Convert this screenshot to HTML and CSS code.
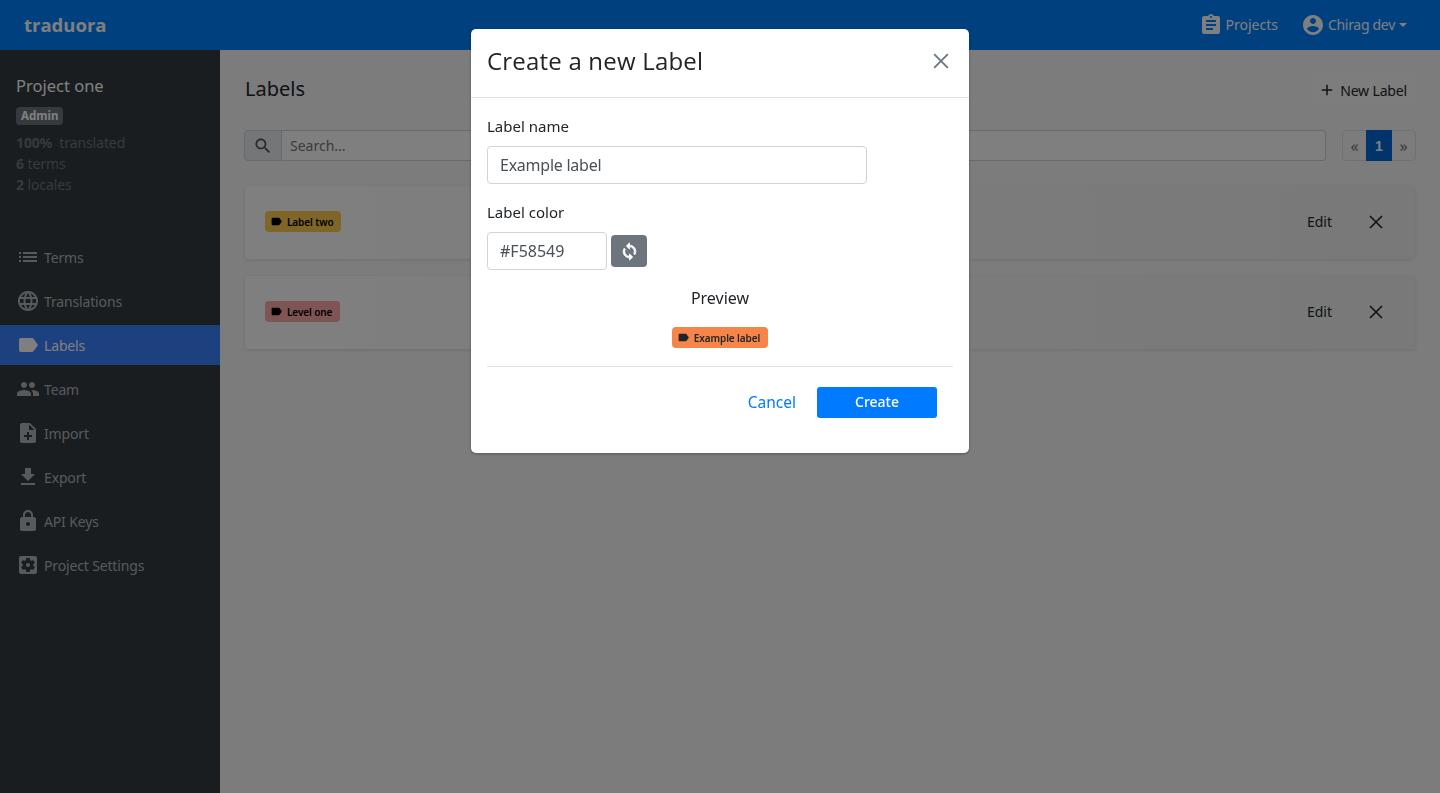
FILE: index.html
```html
<!DOCTYPE html>
<html>
<head>
  <title>Traduora - Labels</title>
  <link rel="stylesheet" href="styles.css">
</head>
<body>
  <svg class="icon-defs" width="0" height="0">
    <symbol id="i-assignment" viewBox="0 0 24 24"><path d="M19 3h-4.18C14.4 1.84 13.3 1 12 1c-1.3 0-2.4.84-2.82 2H5c-1.1 0-2 .9-2 2v14c0 1.1.9 2 2 2h14c1.1 0 2-.9 2-2V5c0-1.1-.9-2-2-2zm-7 0c.55 0 1 .45 1 1s-.45 1-1 1-1-.45-1-1 .45-1 1-1zm2 14H7v-2h7v2zm3-4H7v-2h10v2zm0-4H7V7h10v2z"/></symbol>
    <symbol id="i-account" viewBox="0 0 24 24"><path d="M12 2C6.48 2 2 6.48 2 12s4.48 10 10 10 10-4.48 10-10S17.52 2 12 2zm0 3c1.66 0 3 1.34 3 3s-1.34 3-3 3-3-1.34-3-3 1.34-3 3-3zm0 14.2c-2.5 0-4.71-1.28-6-3.22.03-1.99 4-3.08 6-3.08 1.99 0 5.97 1.09 6 3.08-1.29 1.94-3.5 3.22-6 3.22z"/></symbol>
    <symbol id="i-list" viewBox="0 0 24 24"><path d="M3 13h2v-2H3v2zm0 4h2v-2H3v2zm0-8h2V7H3v2zm4 4h14v-2H7v2zm0 4h14v-2H7v2zM7 7v2h14V7H7z"/></symbol>
    <symbol id="i-language" viewBox="0 0 24 24"><path d="M11.99 2C6.47 2 2 6.48 2 12s4.47 10 9.99 10C17.52 22 22 17.52 22 12S17.52 2 11.99 2zm6.93 6h-2.95c-.32-1.25-.78-2.45-1.38-3.56 1.84.63 3.37 1.91 4.33 3.56zM12 4.04c.83 1.2 1.48 2.53 1.91 3.96h-3.82c.43-1.43 1.08-2.76 1.91-3.96zM4.26 14C4.1 13.36 4 12.69 4 12s.1-1.36.26-2h3.38c-.08.66-.14 1.32-.14 2 0 .68.06 1.34.14 2H4.26zm.82 2h2.95c.32 1.25.78 2.45 1.38 3.56-1.84-.63-3.37-1.9-4.33-3.56zm2.95-8H5.08c.96-1.66 2.49-2.93 4.33-3.56C8.81 5.55 8.35 6.75 8.03 8zM12 19.96c-.83-1.2-1.48-2.53-1.91-3.96h3.82c-.43 1.43-1.08 2.76-1.91 3.96zM14.34 14H9.66c-.09-.66-.16-1.32-.16-2 0-.68.07-1.35.16-2h4.68c.09.65.16 1.32.16 2 0 .68-.07 1.34-.16 2zm.25 5.56c.6-1.11 1.06-2.31 1.38-3.56h2.95c-.96 1.65-2.49 2.93-4.33 3.56zM16.36 14c.08-.66.14-1.32.14-2 0-.68-.06-1.34-.14-2h3.38c.16.64.26 1.31.26 2s-.1 1.36-.26 2h-3.38z"/></symbol>
    <symbol id="i-label" viewBox="0 0 24 24"><path d="M17.63 5.84C17.27 5.33 16.67 5 16 5L5 5.01C3.9 5.01 3 5.9 3 7v10c0 1.1.9 1.99 2 1.99L16 19c.67 0 1.27-.33 1.63-.84L22 12l-4.37-6.16z"/></symbol>
    <symbol id="i-people" viewBox="0 0 24 24"><path d="M16 11c1.66 0 2.99-1.34 2.99-3S17.66 5 16 5c-1.66 0-3 1.34-3 3s1.34 3 3 3zm-8 0c1.66 0 2.99-1.34 2.99-3S9.66 5 8 5C6.34 5 5 6.34 5 8s1.34 3 3 3zm0 2c-2.33 0-7 1.17-7 3.5V19h14v-2.5c0-2.33-4.67-3.5-7-3.5zm8 0c-.29 0-.62.02-.97.05 1.16.84 1.97 1.97 1.97 3.45V19h6v-2.5c0-2.33-4.67-3.5-7-3.5z"/></symbol>
    <symbol id="i-note-add" viewBox="0 0 24 24"><path d="M14 2H6c-1.1 0-1.99.9-1.99 2L4 20c0 1.1.89 2 1.99 2H18c1.1 0 2-.9 2-2V8l-6-6zm2 14h-3v3h-2v-3H8v-2h3v-3h2v3h3v2zm-3-7V3.5L18.5 9H13z"/></symbol>
    <symbol id="i-download" viewBox="0 0 24 24"><path d="M19 9h-4V3H9v6H5l7 7 7-7zM5 18v2h14v-2H5z"/></symbol>
    <symbol id="i-lock" viewBox="0 0 24 24"><path d="M18 8h-1V6c0-2.76-2.24-5-5-5S7 3.24 7 6v2H6c-1.1 0-2 .9-2 2v10c0 1.1.9 2 2 2h12c1.1 0 2-.9 2-2V10c0-1.1-.9-2-2-2zm-6 9c-1.1 0-2-.9-2-2s.9-2 2-2 2 .9 2 2-.9 2-2 2zm3.1-9H8.9V6c0-1.71 1.39-3.1 3.1-3.1 1.71 0 3.1 1.39 3.1 3.1v2z"/></symbol>
    <symbol id="i-settings" viewBox="0 0 24 24"><path d="M12 10c-1.1 0-2 .9-2 2s.9 2 2 2 2-.9 2-2-.9-2-2-2zm7-7H5c-1.11 0-2 .9-2 2v14c0 1.1.89 2 2 2h14c1.11 0 2-.9 2-2V5c0-1.1-.89-2-2-2zm-1.75 9c0 .23-.02.46-.05.68l1.48 1.16c.13.11.17.3.08.45l-1.4 2.42c-.09.15-.27.21-.43.15l-1.74-.7c-.36.28-.76.51-1.18.69l-.26 1.85c-.03.17-.18.3-.35.3h-2.8c-.17 0-.32-.13-.35-.29l-.26-1.85c-.43-.18-.82-.41-1.18-.69l-1.74.7c-.16.06-.34 0-.43-.15l-1.4-2.42c-.09-.15-.05-.34.08-.45l1.48-1.16c-.03-.23-.05-.46-.05-.69 0-.23.02-.46.05-.68l-1.48-1.16c-.13-.11-.17-.3-.08-.45l1.4-2.42c.09-.15.27-.21.43-.15l1.74.7c.36-.28.76-.51 1.18-.69l.26-1.85c.03-.17.18-.3.35-.3h2.8c.17 0 .32.13.35.29l.26 1.85c.43.18.82.41 1.18.69l1.74-.7c.16-.06.34 0 .43.15l1.4 2.42c.09.15.05.34-.08.45l-1.48 1.16c.03.23.05.46.05.69z"/></symbol>
    <symbol id="i-sync" viewBox="0 0 24 24"><path stroke="currentColor" stroke-width="1" d="M12 4V1L8 5l4 4V6c3.31 0 6 2.69 6 6 0 1.01-.25 1.97-.7 2.8l1.46 1.46C19.54 15.03 20 13.57 20 12c0-4.42-3.58-8-8-8zm0 14c-3.31 0-6-2.69-6-6 0-1.01.25-1.97.7-2.8L5.24 7.74C4.46 8.97 4 10.43 4 12c0 4.42 3.58 8 8 8v3l4-4-4-4v3z"/></symbol>
    <symbol id="i-search" viewBox="0 0 24 24"><path d="M15.5 14h-.79l-.28-.27C15.41 12.59 16 11.11 16 9.5 16 5.91 13.09 3 9.5 3S3 5.91 3 9.5 5.91 16 9.5 16c1.61 0 3.09-.59 4.23-1.57l.27.28v.79l5 4.99L20.49 19l-4.99-5zm-6 0C7.01 14 5 11.99 5 9.5S7.01 5 9.5 5 14 7.01 14 9.5 11.99 14 9.5 14z"/></symbol>
    <symbol id="i-add" viewBox="0 0 24 24"><path d="M19 13h-6v6h-2v-6H5v-2h6V5h2v6h6v2z"/></symbol>
    <symbol id="i-x" viewBox="0 0 14 14"><path fill="none" stroke="currentColor" stroke-width="1.6" d="M1 1l12 12M13 1L1 13"/></symbol>
  </svg>

  <nav class="navbar">
    <a class="brand">traduora</a>
    <div class="nav-links">
      <a class="nav-link"><svg class="nav-icon"><use href="#i-assignment"/></svg>Projects</a>
      <a class="nav-link user-link"><svg class="nav-icon"><use href="#i-account"/></svg>Chirag dev<span class="caret"></span></a>
    </div>
  </nav>

  <div class="layout">
    <aside class="sidebar">
      <div class="project">
        <div class="project-name">Project one</div>
        <span class="role-badge">Admin</span>
        <div class="stats">
          <div><b>100%</b>&nbsp; translated</div>
          <div><b>6</b> terms</div>
          <div><b>2</b> locales</div>
        </div>
      </div>
      <ul class="side-menu">
        <li><svg><use href="#i-list"/></svg>Terms</li>
        <li><svg><use href="#i-language"/></svg>Translations</li>
        <li class="active"><svg><use href="#i-label"/></svg>Labels</li>
        <li><svg><use href="#i-people"/></svg>Team</li>
        <li><svg><use href="#i-note-add"/></svg>Import</li>
        <li><svg><use href="#i-download"/></svg>Export</li>
        <li><svg><use href="#i-lock"/></svg>API Keys</li>
        <li><svg><use href="#i-settings"/></svg>Project Settings</li>
      </ul>
    </aside>

    <main class="content">
      <div class="content-head">
        <h1>Labels</h1>
        <button class="btn-new"><svg><use href="#i-add"/></svg>New Label</button>
      </div>
      <div class="toolbar">
        <div class="search">
          <span class="search-addon"><svg><use href="#i-search"/></svg></span>
          <input class="search-input" type="text" placeholder="Search...">
        </div>
        <div class="pager">
          <span>«</span>
          <span class="current">1</span>
          <span>»</span>
        </div>
      </div>
      <div class="card">
        <span class="tag tag-yellow"><svg><use href="#i-label"/></svg>Label two</span>
        <span class="card-actions"><a>Edit</a><svg><use href="#i-x"/></svg></span>
      </div>
      <div class="card">
        <span class="tag tag-red"><svg><use href="#i-label"/></svg>Level one</span>
        <span class="card-actions"><a>Edit</a><svg><use href="#i-x"/></svg></span>
      </div>
    </main>
  </div>

  <div class="backdrop">
    <div class="modal">
      <div class="modal-header">
        <h2>Create a new Label</h2>
        <svg class="modal-close"><use href="#i-x"/></svg>
      </div>
      <form class="modal-body">
        <label>Label name</label>
        <input class="field field-name" type="text" value="Example label">
        <label>Label color</label>
        <div class="color-row">
          <input class="field field-color" type="text" value="#F58549">
          <button class="btn-refresh" type="button"><svg><use href="#i-sync"/></svg></button>
        </div>
        <div class="preview-title">Preview</div>
        <div class="preview">
          <span class="tag tag-orange"><svg><use href="#i-label"/></svg>Example label</span>
        </div>
        <div class="modal-actions">
          <a class="btn-cancel">Cancel</a>
          <button class="btn-create" type="button">Create</button>
        </div>
      </form>
    </div>
  </div>
</body>
</html>
```

FILE: styles.css
```css
* {
  box-sizing: border-box;
}
html, body {
  height: 100%;
}
body {
  margin: 0;
  overflow: hidden;
  background: #f8f9fa;
  color: #212529;
  font-family: "Noto Sans", sans-serif;
  font-size: 14px;
}
.icon-defs {
  display: block;
  height: 0;
}
svg {
  fill: currentColor;
}

/* top bar */
.navbar {
  height: 50px;
  background: #0080ff;
  display: flex;
  align-items: center;
  justify-content: space-between;
  padding: 0 33px 1px 24px;
  color: #fff;
  position: relative;
}
.brand {
  font-family: "Open Sans", sans-serif;
  font-size: 18.5px;
  font-weight: 700;
}
.nav-links {
  display: flex;
  gap: 23px;
}
.nav-link {
  display: flex;
  align-items: center;
  gap: 3px;
}
.user-link {
  letter-spacing: -0.3px;
}
.nav-icon {
  width: 24px;
  height: 24px;
}
.caret {
  width: 0;
  height: 0;
  margin-left: 1px;
  border: 4px solid transparent;
  border-top-color: #fff;
  border-bottom: 0;
}

/* sidebar */
.layout {
  display: flex;
  height: 743px;
}
.sidebar {
  width: 220px;
  background: #343a40;
  color: #fff;
  flex-shrink: 0;
}
.project {
  padding: 25px 16px 0;
}
.project-name {
  font-size: 16.5px;
  line-height: 22px;
  margin-bottom: 8px;
}
.role-badge {
  display: inline-block;
  background: #6c757d;
  border-radius: 4px;
  font-size: 11.5px;
  font-weight: 700;
  line-height: 18px;
  padding: 0 5px;
}
.stats {
  margin-top: 7px;
  color: #6c757d;
  line-height: 21px;
  letter-spacing: -0.1px;
}
.side-menu {
  list-style: none;
  margin: 42px 0 0;
  padding: 0;
}
.side-menu li {
  display: flex;
  align-items: center;
  height: 40px;
  margin-bottom: 4px;
  padding-left: 16px;
  gap: 4px;
  color: #adb5bd;
  letter-spacing: -0.15px;
}
.side-menu li svg {
  width: 24px;
  height: 24px;
}
.side-menu li.active {
  background: #3a80ff;
  color: #fff;
}

/* main */
.content {
  flex: 1;
  padding: 24px 25px;
}
.content-head {
  display: flex;
  align-items: center;
  justify-content: space-between;
  height: 32px;
  margin-bottom: 24px;
}
h1 {
  margin: 0 0 4px;
  font-size: 20px;
  font-weight: 400;
}
.btn-new {
  display: flex;
  align-items: center;
  height: 32px;
  padding: 0 8px;
  gap: 4px;
  border: 0;
  background: #fbfbfb;
  color: #212529;
  font: inherit;
  letter-spacing: -0.15px;
}
.btn-new svg {
  width: 18px;
  height: 18px;
}
.toolbar {
  display: flex;
  gap: 16px;
  margin: 0 -1px 25px;
}
.search {
  flex: 1;
  display: flex;
  height: 31px;
}
.search-addon {
  width: 38px;
  display: flex;
  align-items: center;
  justify-content: center;
  background: #e9ecef;
  border: 1px solid #ced4da;
  border-radius: 4px 0 0 4px;
  color: #495057;
}
.search-addon svg {
  width: 20px;
  height: 20px;
}
.search-input {
  flex: 1;
  border: 1px solid #ced4da;
  border-left: 0;
  border-radius: 0 4px 4px 0;
  padding: 0 8px;
  font: inherit;
  background: #fff;
}
.pager {
  display: flex;
  height: 31px;
  border: 1px solid #dee2e6;
  border-radius: 4px;
  color: #6c757d;
  font-size: 16px;
}
.pager span {
  width: 23px;
  display: flex;
  align-items: center;
  justify-content: center;
}
.pager .current {
  width: 26px;
  height: 31px;
  margin-top: -1px;
  background: #0069d4;
  color: #fff;
  font-family: "Liberation Sans", sans-serif;
  font-size: 14px;
  font-weight: 700;
}
.card {
  height: 73px;
  margin-bottom: 17px;
  padding: 0 32px 2px 20px;
  display: flex;
  align-items: center;
  justify-content: space-between;
  background: linear-gradient(90deg, #fff, #f2f2f2);
  border-radius: 4px;
  box-shadow: 0 1px 4px rgba(0,0,0,0.12);
}
.card-actions {
  display: flex;
  align-items: center;
  gap: 37px;
}
.card-actions svg {
  width: 14px;
  height: 14px;
}
.tag {
  display: inline-flex;
  align-items: center;
  height: 21px;
  padding: 0 8px 0 5px;
  gap: 4px;
  border-radius: 4px;
  font-size: 10px;
  font-weight: 600;
  letter-spacing: -0.1px;
  color: #212529;
}
.tag svg {
  width: 13px;
  height: 13px;
}
.tag-yellow {
  background: #ffcc50;
  color: #000;
}
.tag-red {
  background: #ffa8a8;
  color: #000;
}
.tag-orange {
  background: #f58549;
}

/* modal */
.backdrop {
  position: fixed;
  top: 0;
  right: 0;
  bottom: 0;
  left: 0;
  background: rgba(0,0,0,0.5);
  display: flex;
  justify-content: center;
  align-items: flex-start;
  padding-top: 29px;
}
.modal {
  width: 498px;
  background: #fff;
  border-radius: 5px;
  box-shadow: 0 1px 3px rgba(0,0,0,0.3);
}
.modal-header {
  height: 69px;
  padding: 0 20px 6px 16px;
  display: flex;
  align-items: center;
  justify-content: space-between;
  border-bottom: 1px solid #dee2e6;
}
h2 {
  margin: 0;
  font-family: "Open Sans", sans-serif;
  font-size: 24px;
  font-weight: 400;
  letter-spacing: 0.2px;
  color: #212529;
}
.modal-close {
  width: 16px;
  height: 16px;
  margin-top: 2px;
  color: #6c757d;
}
.modal-body {
  padding: 17px 16px 35px;
  display: flex;
  flex-direction: column;
  font-size: 15px;
}
.modal-body label {
  line-height: 22px;
  margin-bottom: 9px;
}
.field {
  height: 38px;
  border: 1px solid #ced4da;
  border-radius: 4px;
  padding: 0 12px;
  font: inherit;
  font-size: 16px;
  color: #495057;
  background: #fff;
}
.field-name {
  width: 380px;
  margin-bottom: 17px;
  letter-spacing: -0.25px;
}
.color-row {
  display: flex;
  align-items: center;
  gap: 4px;
}
.field-color {
  width: 120px;
}
.btn-refresh {
  width: 36px;
  height: 32px;
  border: 0;
  border-radius: 4px;
  background: #6c757d;
  color: #fff;
  padding: 0;
  display: flex;
  align-items: center;
  justify-content: center;
}
.btn-refresh svg {
  width: 19px;
  height: 19px;
}
.preview-title {
  text-align: center;
  margin-top: 17px;
  line-height: 22px;
  font-size: 16px;
}
.preview {
  display: flex;
  justify-content: center;
  margin-top: 18px;
  padding-bottom: 18px;
  border-bottom: 1px solid #dee2e6;
}
.modal-actions {
  display: flex;
  justify-content: flex-end;
  align-items: center;
  gap: 21px;
  padding: 20px 16px 0 0;
}
.btn-cancel {
  color: #007bff;
  font-size: 15.5px;
  padding-bottom: 2px;
}
.btn-create {
  width: 120px;
  height: 31px;
  padding: 0 0 2px;
  border: 0;
  border-radius: 3px;
  background: #007bff;
  color: #fff;
  font: inherit;
  font-size: 14px;
  font-weight: 500;
}
```
